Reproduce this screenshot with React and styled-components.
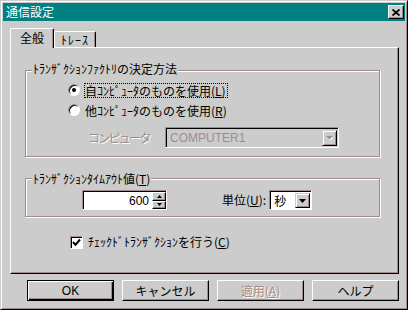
import React from 'react'
import styled, { createGlobalStyle } from 'styled-components'

const FACE = '#cccccc'
const SHADOW = '#a08c8c'
const FONT = `"Noto Sans CJK JP", "Noto Sans", sans-serif`
const LATIN = `"Liberation Sans", Arial, sans-serif`

const GlobalStyle = createGlobalStyle`
  html, body { margin: 0; padding: 0; background: ${FACE}; }
  body { font-family: ${FONT}; font-size: 12px; color: #000; }
  u { text-underline-offset: 1px; }
`

const Window = styled.div`
  width: 408px;
  height: 310px;
  box-sizing: border-box;
  background: ${FACE};
  border: 1px solid;
  border-color: ${FACE} #000 #000 ${FACE};
  box-shadow: inset 1px 1px #fff, inset -1px -1px ${SHADOW};
  padding: 2px;
  display: flex;
  flex-direction: column;
`

const TitleBar = styled.div`
  height: 18px;
  flex: none;
  background: #008080;
  color: #fff;
  display: flex;
  align-items: center;
  justify-content: space-between;
  padding: 0 1px 0 3px;
  font-size: 12px;
  line-height: 14px;
`

const CloseButton = styled.div`
  width: 16px;
  height: 14px;
  box-sizing: border-box;
  background: ${FACE};
  border: 1px solid;
  border-color: #fff #000 #000 #fff;
  box-shadow: inset -1px -1px ${SHADOW};
  display: flex;
  align-items: center;
  justify-content: center;
`

const Body = styled.div`
  flex: 1;
  padding: 7px 6px 0 7px;
  display: flex;
  flex-direction: column;
`

const TabStrip = styled.div`
  height: 19px;
  display: flex;
  align-items: flex-end;
`

const Tab = styled.div`
  position: relative;
  z-index: ${p => (p.$active ? 1 : 0)};
  width: ${p => (p.$active ? 44 : 42)}px;
  height: ${p => (p.$active ? 20 : 16)}px;
  margin-bottom: ${p => (p.$active ? -1 : 0)}px;
  box-sizing: border-box;
  background: ${FACE};
  border-top: 1px solid #fff;
  border-left: 1px solid #fff;
  border-right: 1px solid #000;
  border-radius: 2px 2px 0 0;
  box-shadow: inset -1px 0 ${SHADOW};
  padding-top: ${p => (p.$active ? 2 : 1)}px;
  text-align: center;
  line-height: 14px;
  letter-spacing: ${p => (p.$active ? 0 : 1)}px;
`

const Panel = styled.div`
  height: 227px;
  box-sizing: border-box;
  border: 1px solid;
  border-color: #fff #000 #000 #fff;
  box-shadow: inset -1px -1px ${SHADOW};
  padding: 22px 0 0 14px;
  display: flex;
  flex-direction: column;
`

const Group = styled.div`
  width: 355px;
  height: ${p => p.$height}px;
  margin-top: ${p => p.$top || 0}px;
  box-sizing: border-box;
  border: 1px solid ${SHADOW};
  box-shadow: inset 1px 1px #fff, 1px 1px #fff;
  display: flex;
  flex-direction: column;
  flex: none;
`

const Legend = styled.div`
  align-self: flex-start;
  margin: ${p => p.$lift}px 0 0 6px;
  padding: 0 1px;
  background: ${FACE};
  line-height: 14px;
  white-space: nowrap;
`

const RadioRow = styled.div`
  display: flex;
  align-items: center;
  gap: 4px;
  height: 20px;
  padding-left: 42px;
  margin-top: ${p => p.$top || 0}px;
  white-space: nowrap;
`

const Radio = styled.span`
  width: 12px;
  height: 12px;
  box-sizing: border-box;
  border-radius: 50%;
  background: #fff;
  border: 1px solid;
  border-color: ${SHADOW} #fff #fff ${SHADOW};
  box-shadow: inset 1px 1px #000;
  display: flex;
  align-items: center;
  justify-content: center;
  flex: none;

  &::after {
    content: '';
    display: ${p => (p.$checked ? 'block' : 'none')};
    width: 4px;
    height: 4px;
    border-radius: 50%;
    background: #000;
  }
`

const Caption = styled.span`
  line-height: 13px;
  padding: 0 1px 0 0;
  border: 1px ${p => (p.$focus ? 'dotted #000' : 'solid transparent')};
`

const ComputerRow = styled.div`
  display: flex;
  align-items: center;
  height: 21px;
  margin-top: 7px;
  padding-left: 62px;
`

const Dim = styled.span`
  color: ${SHADOW};
  text-shadow: 1px 1px #fff;
  line-height: 14px;
  white-space: nowrap;
`

const ComputerLabel = styled(Dim)`
  width: 77px;
  letter-spacing: -1.7px;
`

const Sunken = styled.div`
  width: ${p => p.$width}px;
  height: ${p => p.$height}px;
  box-sizing: border-box;
  border: 1px solid;
  border-color: ${SHADOW} #fff #fff ${SHADOW};
  box-shadow: inset 1px 1px #000;
  padding: 1px 0 0 1px;
  background: ${p => p.$fill};
  display: flex;
  align-items: stretch;
  flex: none;
`

const FieldText = styled.div`
  flex: 1;
  display: flex;
  align-items: center;
  justify-content: ${p => (p.$right ? 'flex-end' : 'flex-start')};
  padding: 0 ${p => (p.$right ? 3 : 0)}px 0 ${p => (p.$right ? 0 : 3)}px;
  font-family: ${p => (p.$latin ? LATIN : FONT)};
  font-size: 12px;
  color: ${p => p.$color || '#000'};
  background: ${p => p.$bg || 'transparent'};
  line-height: 14px;
`

const DropButton = styled.div`
  width: 15px;
  margin: 1px 1px 1px 0;
  box-sizing: border-box;
  background: ${FACE};
  border: 1px solid;
  border-color: ${FACE} #000 #000 ${FACE};
  box-shadow: inset 1px 1px #fff, inset -1px -1px ${SHADOW};
  display: flex;
  align-items: center;
  justify-content: center;
`

const TimeoutRow = styled.div`
  display: flex;
  align-items: center;
  height: 20px;
  margin-top: 4px;
  padding-left: 56px;
`

const Spin = styled.div`
  width: 14px;
  display: flex;
  flex-direction: column;
  background: ${FACE};
`

const SpinButton = styled.div`
  flex: 1;
  box-sizing: border-box;
  border: 1px solid;
  border-color: #fff #000 #000 #fff;
  box-shadow: inset -1px -1px ${SHADOW};
  display: flex;
  align-items: center;
  justify-content: center;
`

const UnitLabel = styled.span`
  margin: 0 3px 0 55px;
  line-height: 14px;
  white-space: nowrap;
`

const CheckRow = styled.div`
  display: flex;
  align-items: center;
  gap: 5px;
  height: 14px;
  margin: 18px 0 0 45px;
  white-space: nowrap;
  line-height: 14px;
`

const CheckBox = styled.span`
  width: 13px;
  height: 13px;
  box-sizing: border-box;
  background: #fff;
  border: 1px solid;
  border-color: ${SHADOW} #fff #fff ${SHADOW};
  box-shadow: inset 1px 1px #000;
  display: flex;
  align-items: center;
  justify-content: center;
  flex: none;
`

const ButtonRow = styled.div`
  display: flex;
  justify-content: flex-end;
  gap: 8px;
  margin-top: 6px;
`

const Button = styled.div`
  width: 87px;
  height: 21px;
  box-sizing: border-box;
  background: ${FACE};
  border: 1px solid;
  border-color: ${p => (p.$default ? '#000' : '#fff #000 #000 #fff')};
  box-shadow: ${p =>
    p.$default
      ? `inset 1px 1px #fff, inset -1px -1px #000, inset -2px -2px ${SHADOW}`
      : `inset -1px -1px ${SHADOW}`};
  display: flex;
  align-items: center;
  justify-content: center;
  font-family: ${p => (p.$latin ? LATIN : FONT)};
  font-size: 12px;
  line-height: 14px;
  color: ${p => (p.$disabled ? SHADOW : '#000')};
  text-shadow: ${p => (p.$disabled ? '1px 1px #fff' : 'none')};
`

function Arrow({ color = '#000', up = false, w = 7, h = 4 }) {
  const pts = up ? `0,${h} ${w},${h} ${w / 2},0` : `0,0 ${w},0 ${w / 2},${h}`
  return (
    <svg width={w} height={h} viewBox={`0 0 ${w} ${h}`}>
      <polygon points={pts} fill={color} />
    </svg>
  )
}

export default function App() {
  return (
    <>
      <GlobalStyle />
      <Window>
        <TitleBar>
          <span>通信設定</span>
          <CloseButton>
            <svg width="8" height="7" viewBox="0 0 8 7">
              <path d="M0.5 0.5 L7.5 6.5 M7.5 0.5 L0.5 6.5" stroke="#000" strokeWidth="1.7" />
            </svg>
          </CloseButton>
        </TitleBar>

        <Body>
          <TabStrip>
            <Tab $active>全般</Tab>
            <Tab>ﾄﾚｰｽ</Tab>
          </TabStrip>

          <Panel>
            <Group $height={87}>
              <Legend $lift={-9}>ﾄﾗﾝｻﾞｸｼｮﾝﾌｧｸﾄﾘの決定方法</Legend>
              <RadioRow $top={4}>
                <Radio $checked />
                <Caption $focus>自ｺﾝﾋﾟｭｰﾀのものを使用(<u>L</u>)</Caption>
              </RadioRow>
              <RadioRow>
                <Radio />
                <Caption>他ｺﾝﾋﾟｭｰﾀのものを使用(<u>R</u>)</Caption>
              </RadioRow>
              <ComputerRow>
                <ComputerLabel>コンピュータ</ComputerLabel>
                <Sunken $width={174} $height={21} $fill={FACE}>
                  <FieldText $latin $color={SHADOW}>COMPUTER1</FieldText>
                  <DropButton>
                    <svg width="7" height="5" viewBox="0 0 7 5">
                      <polygon points="1,1 8,1 4.5,4.5" fill="#fff" />
                      <polygon points="0,0 7,0 3.5,3.5" fill={SHADOW} />
                    </svg>
                  </DropButton>
                </Sunken>
              </ComputerRow>
            </Group>

            <Group $height={39} $top={21}>
              <Legend $lift={-7}>ﾄﾗﾝｻﾞｸｼｮﾝﾀｲﾑｱｳﾄ値(<u>T</u>)</Legend>
              <TimeoutRow>
                <Sunken $width={85} $height={20} $fill="#fff">
                  <FieldText $latin $right>600</FieldText>
                  <Spin>
                    <SpinButton><Arrow up w={5} h={3} /></SpinButton>
                    <SpinButton><Arrow w={5} h={3} /></SpinButton>
                  </Spin>
                </Sunken>
                <UnitLabel>単位(<u>U</u>):</UnitLabel>
                <Sunken $width={43} $height={20} $fill="#fff">
                  <FieldText $bg="#fff">秒</FieldText>
                  <DropButton>
                    <Arrow w={7} h={4} />
                  </DropButton>
                </Sunken>
              </TimeoutRow>
            </Group>

            <CheckRow>
              <CheckBox>
                <svg width="9" height="9" viewBox="0 0 9 9">
                  <path d="M1 4 L3.5 6.8 L8 1.5" stroke="#000" strokeWidth="2" fill="none" />
                </svg>
              </CheckBox>
              <span>ﾁｪｯｸﾄﾞﾄﾗﾝｻﾞｸｼｮﾝを行う(<u>C</u>)</span>
            </CheckRow>
          </Panel>

          <ButtonRow>
            <Button $default $latin>OK</Button>
            <Button>キャンセル</Button>
            <Button $disabled>適用(<u>A</u>)</Button>
            <Button>ヘルプ</Button>
          </ButtonRow>
        </Body>
      </Window>
    </>
  )
}
